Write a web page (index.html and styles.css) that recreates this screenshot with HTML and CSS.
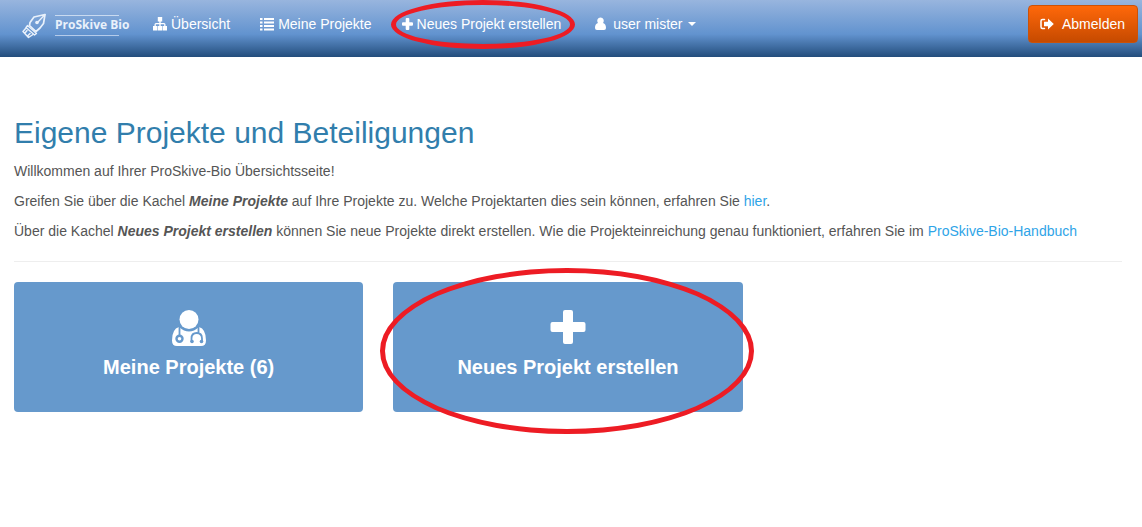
FILE: index.html
```html
<!DOCTYPE html>
<html lang="de">
<head>
<meta charset="utf-8">
<meta name="viewport" content="width=device-width, initial-scale=1">
<title>ProSkive Bio</title>
<link rel="stylesheet" href="styles.css">
</head>
<body>
<header class="navbar">
  <a class="brand" href="#">
    <svg class="brand-icon" viewBox="0 0 24 26" aria-hidden="true">
      <g fill="none" stroke="currentColor" stroke-width="1.700" stroke-linejoin="round" stroke-linecap="round">
        <path d="M23 1.500 12 4 8 9.500 7.500 12.500 14 18.500 18 15 21.500 10.500Z"/>
        <path d="M23 1.500 15.500 9.500" stroke-width="1.300"/>
        <path d="M5.500 12.500 14.500 20.500 12.500 22 4 14.500Z" stroke-width="1.300"/>
        <path d="M4 15 1 18.500 6.500 24.500 11 21.500M5 17.500 3 20M8 20.500 6 22.500" stroke-width="1.500"/>
      </g>
      <circle cx="15" cy="9.500" r="1.800" fill="currentColor"/>
    </svg>
    <span class="brand-name">ProSkive Bio</span>
  </a>
  <nav class="menu">
    <a class="menu-link" href="#">
      <svg class="icon" viewBox="0 0 14 14" aria-hidden="true"><path fill="currentColor" d="M4.800 0h4.400v4.500H7.700V6H11q1.500 0 1.500 1.500V9H14v4.500H9.700V9h1.500V7.300H7.700V9h1.500v4.500H4.800V9h1.500V7.300H2.800V9h1.500v4.500H0V9h1.500V7.500Q1.500 6 3 6h3.300V4.500H4.800z"/></svg>
      Übersicht</a>
    <a class="menu-link" href="#">
      <svg class="icon" viewBox="0 0 14 14" aria-hidden="true"><path fill="currentColor" d="M0 1h2.500v2H0zM4 1h10v2H4zM0 4.500h2.500v2H0zM4 4.500h10v2H4zM0 8h2.500v2H0zM4 8h10v2H4zM0 11.500h2.500v2H0zM4 11.500h10v2H4z"/></svg>
      Meine Projekte</a>
    <a class="menu-link marked" href="#">
      <svg class="icon icon-narrow" viewBox="0 0 11 14" aria-hidden="true"><path fill="currentColor" d="M4.700 1h1.600q1 0 1 1v3.200H10q1 0 1 1v1.600q0 1-1 1H7.300V12q0 1-1 1H4.700q-1 0-1-1V8.800H1q-1 0-1-1V6.200q0-1 1-1h2.700V2q0-1 1-1z"/></svg>
      Neues Projekt erstellen
      <span class="marker marker-link"></span></a>
    <a class="menu-link menu-user" href="#">
      <svg class="icon icon-narrow" viewBox="0 0 11 14" aria-hidden="true"><path fill="currentColor" d="M5.500.500a3.200 3.400 0 0 1 2.600 5.500C10.200 6.500 11 8.500 11 11q0 2-2 2H2q-2 0-2-2c0-2.500.8-4.500 2.900-5A3.200 3.400 0 0 1 5.500.500z"/></svg>
      user mister
      <span class="caret"></span></a>
  </nav>
  <button class="logout" type="button">
    <svg class="icon" viewBox="0 0 14 14" aria-hidden="true"><path fill="none" stroke="currentColor" stroke-width="1.500" stroke-linecap="round" d="M4.500 2.500H2.500q-1.500 0-1.500 1.500v6q0 1.500 1.500 1.500h2"/><path fill="currentColor" d="M8 1.500 13.800 7 8 12.500V9.300H4V4.700h4z"/></svg>
    Abmelden
  </button>
</header>
<main class="content">
  <h1 class="title">Eigene Projekte und Beteiligungen</h1>
  <p class="text">Willkommen auf Ihrer ProSkive-Bio Übersichtsseite!</p>
  <p class="text">Greifen Sie über die Kachel <em class="term">Meine Projekte</em> auf Ihre Projekte zu. Welche Projektarten dies sein können, erfahren Sie <a class="link" href="#">hier</a>.</p>
  <p class="text">Über die Kachel <em class="term">Neues Projekt erstellen</em> können Sie neue Projekte direkt erstellen. Wie die Projekteinreichung genau funktioniert, erfahren Sie im <a class="link" href="#">ProSkive-Bio-Handbuch</a></p>
  <hr class="rule">
  <div class="tiles">
    <a class="tile" href="#">
      <svg class="tile-icon" viewBox="0 0 36 36" aria-hidden="true">
        <path fill="#fff" d="M8 17Q13 21.500 18 21.500T28 17Q35 19 35 30.500 35 36 30 36H6Q1 36 1 30.500 1 19 8 17Z"/>
        <circle cx="18" cy="9.500" r="10.500" fill="#69c"/>
        <circle cx="18" cy="9.500" r="9.500" fill="#fff"/>
        <g fill="none" stroke="#69c" stroke-width="1.800">
          <path d="M8.500 16v10M27.500 16v7M20.500 32v-3.500q0-5.500 5.200-5.500t5.300 5.500V32"/>
          <circle cx="8.500" cy="28.800" r="3" stroke-width="2.400"/>
        </g>
        <g fill="#69c"><circle cx="21" cy="31.500" r="1.800"/><circle cx="30.500" cy="31.500" r="1.800"/></g>
      </svg>
      <span class="tile-label">Meine Projekte (6)</span>
    </a>
    <a class="tile marked" href="#">
      <svg class="tile-icon" viewBox="0 0 36 36" aria-hidden="true"><path fill="#fff" d="M15 0h6q2 0 2 2v10h10.500q2 0 2 2v6q0 2-2 2H23v10q0 2-2 2h-6q-2 0-2-2V22H2.500q-2 0-2-2v-6q0-2 2-2H13V2q0-2 2-2z"/></svg>
      <span class="tile-label">Neues Projekt erstellen</span>
      <span class="marker marker-tile"></span>
    </a>
  </div>
</main>
</body>
</html>
```
FILE: styles.css
```css
* {
  box-sizing: border-box;
}

body {
  margin: 0;
  background: #fff;
  color: #555;
  font: 14px/20px "Liberation Sans", Arial, sans-serif;
}

.navbar {
  display: flex;
  align-items: flex-start;
  min-height: 57px;
  padding: 0 4px 0 22px;
  background: linear-gradient(#98b5de 0%, #6293cf 60%, #234d7c 100%);
}

.brand {
  display: flex;
  gap: 9px;
  width: 116px;
  padding-top: 13px;
  color: #e9f1fb;
  text-decoration: none;
}

.brand-icon {
  flex: none;
  width: 24px;
  height: 26px;
}

.brand-name {
  height: 21px;
  margin-top: 2px;
  background: linear-gradient(#c9daf0, #c9daf0) top left / 64px 1px no-repeat,
    linear-gradient(#b4cbea, #b4cbea) bottom left / 64px 1px no-repeat;
  font: bold 12px/19px "Open Sans", sans-serif;
  white-space: nowrap;
}

.menu {
  display: flex;
}

.menu-link {
  display: flex;
  align-items: center;
  gap: 4px;
  padding: 14px 15px;
  color: #fff;
  white-space: nowrap;
  text-decoration: none;
}

.menu-user {
  gap: 7px;
  padding-left: 19px;
}

.icon {
  flex: none;
  width: 14px;
  height: 14px;
}

.icon-narrow {
  width: 11px;
}

.caret {
  margin-left: -2px;
  border: 4px solid transparent;
  border-top-color: #fff;
  border-bottom: 0;
}

.logout {
  display: flex;
  align-items: center;
  gap: 8px;
  margin: 5px 0 0 auto;
  padding: 8px 12px 8px 11px;
  border: 1px solid #cc5208;
  border-radius: 4px;
  background: linear-gradient(#ff680a, #c64a00);
  color: #fff;
  font: inherit;
}

.content {
  padding: 60px 20px 40px 14px;
}

.title {
  margin: 0 0 12px;
  color: #317eac;
  font-size: 30px;
  font-weight: normal;
  line-height: 32px;
}

.text {
  margin: 0 0 10px;
}

.term {
  font-weight: bold;
}

.link {
  color: #2fa4e7;
  text-decoration: none;
}

.rule {
  margin: 20px 0;
  border: 0;
  border-top: 1px solid #eee;
}

.tiles {
  display: grid;
  grid-template-columns: repeat(3, 1fr);
  gap: 30px;
}

.tile {
  display: flex;
  flex-direction: column;
  align-items: center;
  gap: 10px;
  padding: 28px 15px 34px;
  border-radius: 4px;
  background: #69c;
  color: #fff;
  text-decoration: none;
}

.tile-icon {
  width: 36px;
  height: 36px;
}

.tile-label {
  font-size: 20px;
  font-weight: bold;
  line-height: 22px;
}

.marked {
  position: relative;
}

.marker {
  position: absolute;
  border: 5px solid #ed1c24;
  border-radius: 50%;
  pointer-events: none;
}

.marker-link {
  inset: 0 1px -1px 4px;
}

.marker-tile {
  inset: -14px -11px -22px -13px;
}
```
